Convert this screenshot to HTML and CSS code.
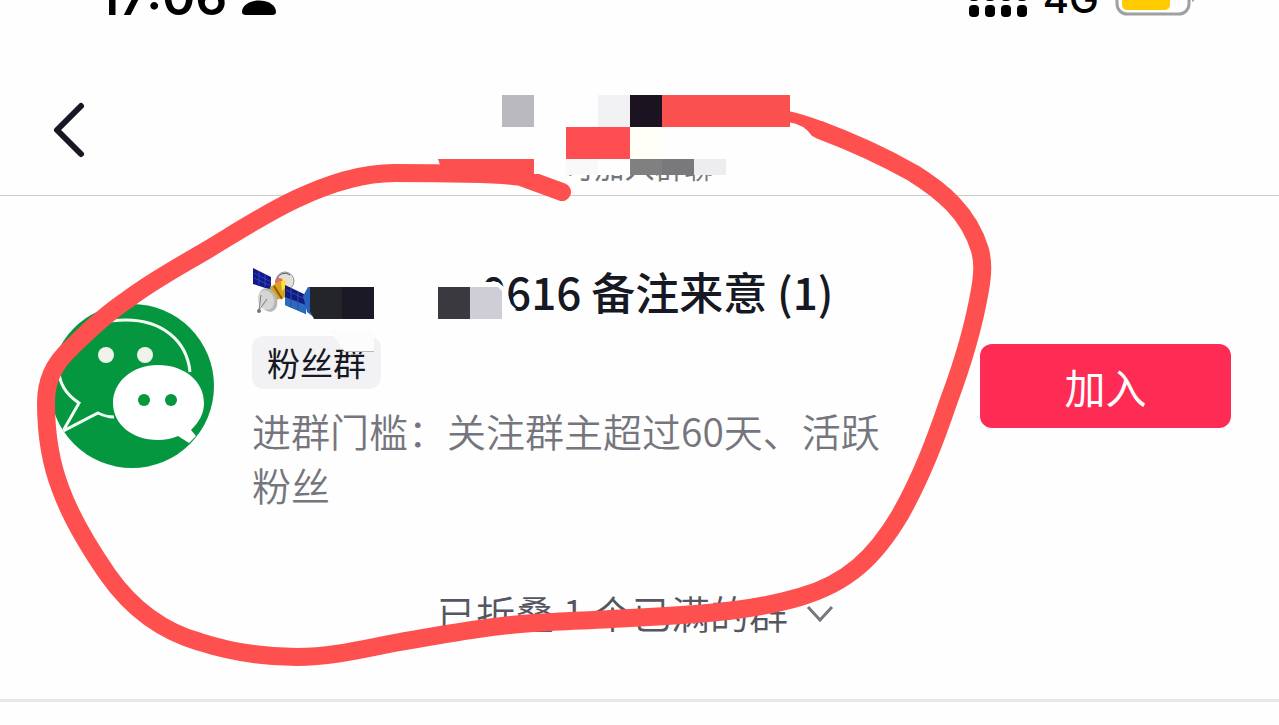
FILE: index.html
```html
<!DOCTYPE html>
<html lang="zh-CN">
<head>
<meta charset="utf-8">
<meta name="viewport" content="width=device-width, initial-scale=1">
<title>加入群聊</title>
<link rel="stylesheet" href="styles.css">
</head>
<body>
<div class="screen">
  <div class="status">
    <div class="status-side">
      <span class="clock">17:06</span>
      <svg class="person" viewBox="0 0 34 32" aria-hidden="true"><circle cx="17" cy="7" r="7"/><path d="M0 27C0 20 8 15.500 17 15.500S34 20 34 27Q34 30 30 30H4Q0 30 0 27Z"/></svg>
    </div>
    <div class="status-side">
      <svg class="signal" viewBox="0 0 60 34" aria-hidden="true">
        <g><rect x="1" y="7" width="10" height="11" rx="4"/><rect x="17" y="7" width="10" height="11" rx="4"/><rect x="33" y="7" width="10" height="11" rx="4"/><rect x="49" y="7" width="10" height="11" rx="4"/>
        <rect x="1" y="22" width="10" height="12" rx="4"/><rect x="17" y="22" width="10" height="12" rx="4"/><rect x="33" y="22" width="10" height="12" rx="4"/><rect x="49" y="22" width="10" height="12" rx="4"/></g>
      </svg>
      <span class="network">4G</span>
      <svg class="battery" viewBox="0 0 82 38" aria-hidden="true"><rect x="2" y="1" width="72" height="34" rx="10" fill="#fff" stroke="#a0a0a0" stroke-width="3"/><rect x="7" y="7" width="48" height="24" rx="5" fill="#ffcb00"/><path d="M77 11Q81 13 81 17T77 23Z" fill="#a0a0a0"/></svg>
    </div>
  </div>
  <header class="header">
    <button class="back" aria-label="返回"><svg viewBox="0 0 34 58" aria-hidden="true"><path d="M29 5L5 29L29 53"/></svg></button>
    <p class="subtitle">可加入群聊</p>
  </header>
  <main>
    <section class="group">
      <svg class="avatar" viewBox="0 0 164 164" role="img" aria-label="群头像">
        <clipPath id="disc"><circle cx="82" cy="82" r="82"/></clipPath>
        <g clip-path="url(#disc)">
          <rect width="164" height="164" fill="#04973f"/>
          <path d="M140 68C137 36 111 16 76 16C38 16 9 37 9 66C9 80 17 91 29 99L13 127L48 109Q56 113 64 113" fill="none" stroke="#f4fff4" stroke-width="3"/>
          <circle cx="56" cy="51" r="8" fill="#f0f3e9"/><circle cx="95" cy="51" r="8" fill="#f0f3e9"/>
          <path d="M108 61C134 61 154 77 154 99C154 110 149 118 141 126L146 132L139 139L128 132Q119 136 108 136C82 136 63 120 63 99S82 61 108 61Z" fill="#fff"/>
          <circle cx="94" cy="96" r="6" fill="#04973f"/><circle cx="121" cy="96" r="6" fill="#04973f"/>
        </g>
      </svg>
      <div class="info">
        <h1 class="title">
          <svg class="satellite" viewBox="0 0 58 50" aria-hidden="true">
            <circle cx="33" cy="13" r="9" fill="#e4e1d9" stroke="#8d9699" stroke-width="1"/><path d="M25 13a8 8 0 0 1 13-6" fill="none" stroke="#555d65" stroke-width="1"/><circle cx="27" cy="14" r="4" fill="#e86a70"/>
            <path d="M1 0L19 9V22L1 16Z" fill="#101987"/><path d="M2 5L19 14M2 10L19 18M7 3V16M13 6V19" stroke="#2c46b8" stroke-width="1"/>
            <path d="M18 19L28 13L36 19L34 29L24 32L17 26Z" fill="#d7a51d"/><path d="M29 13L34 12V19L30 23Z" fill="#ffe238"/><path d="M22 18L30 31" stroke="#8c5818" stroke-width="2"/>
            <path d="M33 17L54 27V46L33 37Z" fill="#111b7c"/><path d="M33 29L54 37V46L33 37Z" fill="#2b6bbb"/><path d="M34 22L53 31M39 20V39M46 24V42" stroke="#2c46b8" stroke-width="1"/>
            <ellipse cx="16" cy="32" rx="9" ry="12" transform="rotate(-22 16 32)" fill="#b5b8bb"/><ellipse cx="14" cy="32" rx="8" ry="10" transform="rotate(-22 14 32)" fill="#d5d5d2"/><path d="M7 42L15 31M7 42L9 27" stroke="#777c80" stroke-width="1"/><circle cx="7" cy="43" r="2" fill="#777"/>
          </svg>
          <span class="name">0616 备注来意 (1)</span>
        </h1>
        <span class="tag">粉丝群</span>
        <p class="rule">进群门槛：关注群主超过60天、活跃粉丝</p>
      </div>
      <button class="join">加入</button>
    </section>
    <button class="fold"><span>已折叠 1 个已满的群</span><svg viewBox="0 0 28 18" aria-hidden="true"><path d="M2 2L14 15L26 2"/></svg></button>
  </main>
  <svg class="markup" viewBox="0 0 1279 725" aria-hidden="true">
    <path d="M534 140H726V175H534Z" fill="#fefefe"/>
    <path d="M334 336L329 330H374V351H344Q339 344 334 336Z" fill="#fcfcfd"/>
    <path d="M342 351.500H374" stroke="#b9b9bd"/>
    <path d="M478 282H498L504 287L507 292L511 304L516 309L508 320H478Z" fill="#fefefe"/>
    <path d="M303 296L308 287H316V319L307 312Z" fill="#2861bb"/>
    <path d="M310 287H342V319H314L310 311Z" fill="#232528"/>
    <path d="M342 287H374V319H342Z" fill="#1a1925"/>
    <path d="M438 287H470V319H438Z" fill="#3a3940"/>
    <path d="M470 287H498L502 291V319H470Z" fill="#cfced6"/>
    <g class="stroke">
      <path d="M562 192L521 177C500 173 440 173 395 173C360 173 328 184 296 199C266 213 237 232 207 250C180 266 152 281 127 300C106 314 88 331 72 347C52 365 46 383 46 403C46 435 50 462 61 490C72 520 90 549 108 575C132 609 161 631 200 642C231 652 262 657 297 657C334 657 367 648 400 642C445 634 489 626 533 623C565 621 598 620 630 618C690 615 749 612 800 597C848 583 875 557 900 515C922 476 936 438 949 400C961 368 973 330 980 290C983 272 983 262 980 250C969 213 942 191 913 173C883 156 852 142 820 130"/>
    </g>
    <path d="M788 111Q803 114 824 122L817 138L812 136Q804 124 788 122Z" fill="#fd504f"/>
    <path d="M438 159H534V175L520 182H450L441 168Z" fill="#fb504f"/>
    <path d="M534 159H566V174H534Z" fill="#fefefe"/>
    <path d="M502 95H534V127H502Z" fill="#bab9be"/>
    <path d="M598 95H630V127H598Z" fill="#f2f2f5"/>
    <path d="M630 95H662V127H630Z" fill="#1b1420"/>
    <path d="M662 95H790V127H662Z" fill="#fa5150"/>
    <path d="M566 127H630V159H566Z" fill="#ff4e51"/>
    <path d="M630 127H662V159H630Z" fill="#fffff7"/>
    <path d="M566 159H598V175H566Z" fill="#f9f9fa"/>
    <path d="M630 159H662V175H630Z" fill="#808081"/>
    <path d="M662 159H694V175H662Z" fill="#79797b"/>
    <path d="M694 159H726V175H694Z" fill="#ededef"/>
  </svg>
</div>
</body>
</html>
```
FILE: styles.css
```css
* { box-sizing: border-box; }
body {
  margin: 0;
  background: #fefefe;
  color: #161823;
  font-family: "Noto Sans CJK SC", sans-serif;
  overflow-x: hidden;
}
h1, p { margin: 0; }
button { border: 0; padding: 0; background: none; font-family: inherit; }
.screen { position: relative; min-height: 100vh; overflow: hidden; }

.status {
  display: flex;
  justify-content: space-between;
  align-items: flex-end;
  height: 17px;
  padding: 0 82px 0 98px;
  color: #000;
  font-family: Inter, sans-serif;
}
.status-side { display: flex; align-items: flex-end; }
.clock { font-size: 50px; font-weight: 600; line-height: 40px; }
.person { width: 34px; height: 32px; margin-left: 15px; }
.signal { width: 60px; height: 34px; }
.network { margin-left: 15px; font-size: 40px; font-weight: 500; line-height: 36px; }
.battery { width: 82px; height: 38px; margin-left: 16px; }

.header {
  position: relative;
  display: flex;
  justify-content: center;
  align-items: flex-end;
  height: 179px;
  padding-bottom: 12px;
  border-bottom: 1px solid #cccccd;
}
.back { position: absolute; left: 52px; top: 84px; width: 34px; height: 58px; }
.back svg { display: block; fill: none; stroke: #161823; stroke-width: 6; stroke-linecap: round; stroke-linejoin: round; }
.subtitle { font-size: 30px; line-height: 36px; color: #75767c; }

.group { display: flex; align-items: center; padding: 65px 48px 0 50px; }
.avatar { flex: none; width: 164px; height: 164px; margin-right: 38px; }
.info { flex: 1; min-width: 0; margin-right: 80px; }
.title { display: flex; align-items: center; height: 64px; font-size: 44px; font-weight: 500; line-height: 60px; white-space: nowrap; }
.satellite { width: 58px; height: 50px; }
.name { margin-left: 171px; padding-bottom: 4px; }
.tag {
  display: block;
  width: fit-content;
  margin-top: 11px;
  padding: 0 15px;
  border-radius: 12px;
  background: #f2f2f4;
  font-size: 33px;
  line-height: 53px;
}
.rule { margin-top: 14px; font-size: 39px; font-weight: 350; line-height: 54px; color: #75767d; }
.join {
  flex: none;
  width: 251px;
  height: 84px;
  border-radius: 12px;
  background: #fe2c55;
  color: #fff;
  font-size: 41px;
  font-weight: 400;
  line-height: 60px;
}
.fold {
  display: flex;
  justify-content: center;
  align-items: center;
  gap: 18px;
  width: 100%;
  height: 191px;
  padding: 14px 8px 0 0;
  border-bottom: 3px solid #e8e8e9;
  color: #55565f;
  font-size: 39px;
  font-weight: 350;
}
.fold svg { width: 28px; height: 18px; margin-top: 4px; fill: none; stroke: #77787f; stroke-width: 3; }

/* Hand-drawn marker and mosaic blocks over the page */
.markup { position: absolute; left: 0; top: 0; width: 100%; height: auto; pointer-events: none; }
.stroke { fill: none; stroke: #fd504f; stroke-width: 18; stroke-linecap: round; stroke-linejoin: round; }
```
